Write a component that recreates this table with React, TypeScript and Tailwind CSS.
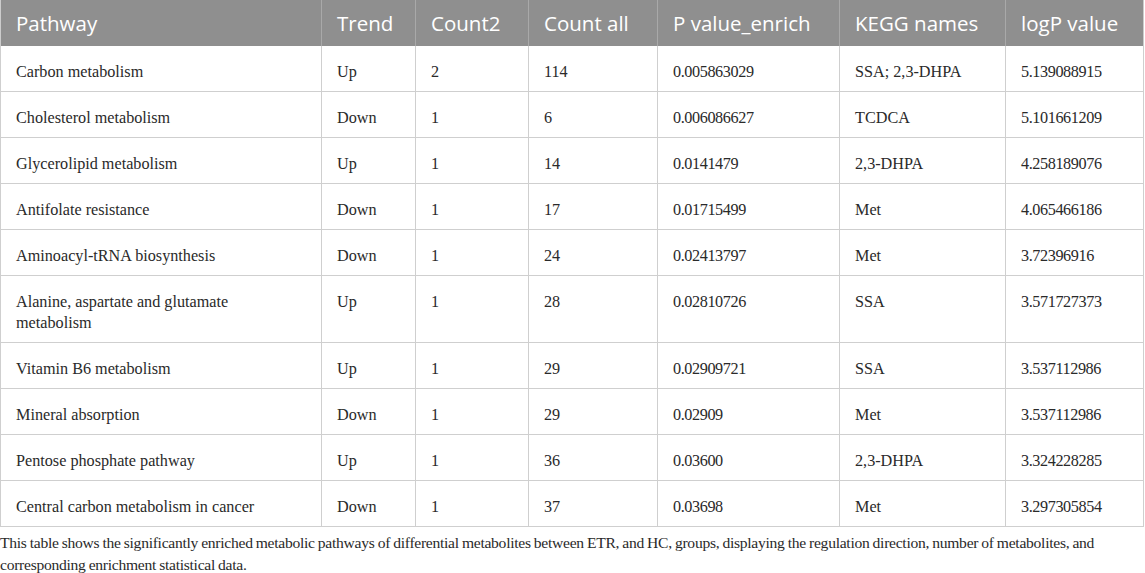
import React from 'react';

type Row = {
  pathway: string;
  trend: string;
  count2: string;
  countAll: string;
  p: string;
  kegg: string;
  logp: string;
};

const rows: Row[] = [
  { pathway: 'Carbon metabolism', trend: 'Up', count2: '2', countAll: '114', p: '0.005863029', kegg: 'SSA; 2,3-DHPA', logp: '5.139088915' },
  { pathway: 'Cholesterol metabolism', trend: 'Down', count2: '1', countAll: '6', p: '0.006086627', kegg: 'TCDCA', logp: '5.101661209' },
  { pathway: 'Glycerolipid metabolism', trend: 'Up', count2: '1', countAll: '14', p: '0.0141479', kegg: '2,3-DHPA', logp: '4.258189076' },
  { pathway: 'Antifolate resistance', trend: 'Down', count2: '1', countAll: '17', p: '0.01715499', kegg: 'Met', logp: '4.065466186' },
  { pathway: 'Aminoacyl-tRNA biosynthesis', trend: 'Down', count2: '1', countAll: '24', p: '0.02413797', kegg: 'Met', logp: '3.72396916' },
  { pathway: 'Alanine, aspartate and glutamate metabolism', trend: 'Up', count2: '1', countAll: '28', p: '0.02810726', kegg: 'SSA', logp: '3.571727373' },
  { pathway: 'Vitamin B6 metabolism', trend: 'Up', count2: '1', countAll: '29', p: '0.02909721', kegg: 'SSA', logp: '3.537112986' },
  { pathway: 'Mineral absorption', trend: 'Down', count2: '1', countAll: '29', p: '0.02909', kegg: 'Met', logp: '3.537112986' },
  { pathway: 'Pentose phosphate pathway', trend: 'Up', count2: '1', countAll: '36', p: '0.03600', kegg: '2,3-DHPA', logp: '3.324228285' },
  { pathway: 'Central carbon metabolism in cancer', trend: 'Down', count2: '1', countAll: '37', p: '0.03698', kegg: 'Met', logp: '3.297305854' },
];

const headers = ['Pathway', 'Trend', 'Count2', 'Count all', 'P value_enrich', 'KEGG names', 'logP value'];
const widths = ['w-[321px]', 'w-[94px]', 'w-[113px]', 'w-[129px]', 'w-[182px]', 'w-[166px]', 'w-[138px]'];

export default function App() {
  return (
    <div className="w-[1145px] h-[573px] bg-white overflow-hidden font-['Liberation_Serif',serif] text-[#2a2a2a]">
      <table className="w-[1143px] table-fixed border-collapse">
        <colgroup>
          {widths.map((w, i) => (
            <col key={i} className={w} />
          ))}
        </colgroup>
        <thead>
          <tr className="bg-[#8f8f8f]">
            {headers.map((h) => (
              <th
                key={h}
                className="h-[46px] px-[15px] text-left align-middle font-normal text-white text-[20.5px] border-x border-[#a9a9a9] first:border-l-[#cccccc] last:border-r-[#cccccc] font-['Open_Sans',sans-serif]"
              >
                {h}
              </th>
            ))}
          </tr>
        </thead>
        <tbody className="text-[16.2px]">
          {rows.map((r) => (
            <tr key={r.pathway} className="border-b border-[#cfcfcf]">
              {[r.pathway, r.trend, r.count2, r.countAll, r.p, r.kegg, r.logp].map((c, i) => (
                <td
                  key={i}
                  className={`pl-[15px] pt-[16px] pb-[8px] leading-[21px] align-top border-x border-[#cfcfcf] ${
                    i === 0 ? 'pr-[60px]' : 'pr-[12px]'
                  } ${i === 4 || i === 6 ? 'tracking-[-0.4px]' : ''}`}
                >
                  {c}
                </td>
              ))}
            </tr>
          ))}
        </tbody>
      </table>
      <p className="mt-[5px] text-[15.6px] leading-[22px] tracking-[-0.28px] [word-spacing:-0.5px]">
        <span className="whitespace-nowrap">
          This table shows the significantly enriched metabolic pathways of differential metabolites between ETR, and HC, groups, displaying the regulation direction, number of metabolites, and
        </span>
        <br />
        corresponding enrichment statistical data.
      </p>
    </div>
  );
}
